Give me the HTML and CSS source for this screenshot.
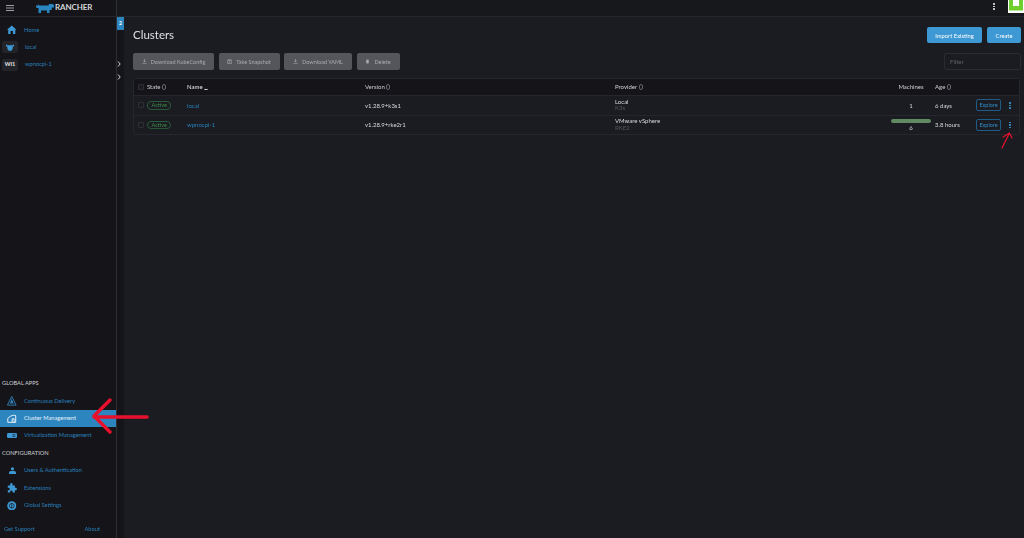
FILE: index.html
```html
<!DOCTYPE html>
<html lang="en">
<head>
<meta charset="utf-8">
<title>Rancher - Clusters</title>
<link rel="stylesheet" href="styles.css">
</head>
<body>
<div class="app">
  <header class="top">
    <div class="top-left">
      <svg class="burger" viewBox="0 0 8 6"><path d="M0 .5h8M0 3h8M0 5.500h8" stroke="#aeb0b5" stroke-width=".9"/></svg>
      <svg class="logo" viewBox="0 0 18 9"><path d="M0 1.500h2V0l1 1.500h9.500L13 0h3.500L18 1v2.500h-2L15.500 6h-2v3h-2.500V6.500H5V9H2.500V4H1L0 3z" fill="#2a86c0"/></svg>
      <span class="brand">RANCHER</span>
    </div>
    <div class="top-right">
      <span class="kebab light"><i></i><i></i><i></i></span>
      <span class="avatar"><svg viewBox="0 0 16 13"><path d="M0 0h16v13H0z" fill="#fff"/><path d="M1 0h4v6h6V0h4v10.500H1z" fill="#6fcf2e"/></svg></span>
    </div>
  </header>
  <div class="body">
    <aside class="side">
      <nav class="nav-top">
        <a class="item"><span class="ic"><svg viewBox="0 0 12 11"><path d="M6 0l6 5.500h-1.500V11H7.500V7h-3v4h-3V5.500H0z" fill="#3d98d3"/></svg></span>Home</a>
        <a class="item"><span class="ic chip"><svg viewBox="0 0 12 10"><path d="M0 0l2 1.500h8L12 0v3l-2 1v3L8 10H4L2 7V4L0 3z" fill="#3d98d3"/></svg></span>local</a>
        <a class="item"><span class="ic chip txt">WI1</span>wpnocpi-1</a>
      </nav>
      <div class="nav-bottom">
        <h4 class="group">GLOBAL APPS</h4>
        <a class="item"><span class="ic"><svg viewBox="0 0 12 12"><path d="M6 .5L11.500 11.500H.5z" fill="none" stroke="#2f7fb5" stroke-width="1.200"/><path d="M6 3.500L8.500 9.500h-5z" fill="#2f7fb5"/></svg></span>Continuous Delivery</a>
        <a class="item active"><span class="ic"><svg viewBox="0 0 12 10"><path d="M1 9.500V4.500L4 2l4-1.500 3 .5v8.500zM6.500 9.500V5h2.500v4.500" fill="none" stroke="#fff" stroke-width="1.100"/></svg></span>Cluster Management</a>
        <a class="item"><span class="ic"><svg class="wide" viewBox="0 0 12 6"><rect x="0" y="0" width="12" height="6" rx="1.500" fill="#3d98d3"/><path d="M6.500 2h3.500M6.500 4h3.500" stroke="#141419" stroke-width=".8"/></svg></span>Virtualization Management</a>
        <h4 class="group">CONFIGURATION</h4>
        <a class="item"><span class="ic"><svg class="small" viewBox="0 0 10 10"><circle cx="5" cy="2.500" r="2.300" fill="#3d98d3"/><path d="M0 10V8c0-1.500 2-2.500 5-2.500S10 6.500 10 8v2z" fill="#3d98d3"/></svg></span>Users &amp; Authentication</a>
        <a class="item"><span class="ic"><svg viewBox="0 0 12 12"><path d="M1 3h3V1.500a1.500 1.500 0 013 0V3h3v3h1a1.500 1.500 0 010 3h-1v3H7v-1a1.500 1.500 0 00-3 0v1H1V9h1a1.500 1.500 0 000-3H1z" fill="#3d98d3"/></svg></span>Extensions</a>
        <a class="item"><span class="ic"><svg viewBox="0 0 12 12"><circle cx="6" cy="6" r="5.700" fill="#3d98d3"/><circle cx="6" cy="6" r="3" fill="none" stroke="#141419" stroke-width=".9"/><path d="M6 3v6" stroke="#141419" stroke-width=".9"/></svg></span>Global Settings</a>
      </div>
      <footer class="side-foot"><a>Get Support</a><a>About</a></footer>
    </aside>
    <div class="gutter">
      <span class="tab">2</span>
      <svg class="chev first" viewBox="0 0 4 6"><path d="M1 .5L3.200 3 1 5.500" fill="none" stroke="#d5d6d8"/></svg>
      <svg class="chev" viewBox="0 0 4 6"><path d="M1 .5L3.200 3 1 5.500" fill="none" stroke="#d5d6d8"/></svg>
    </div>
    <main class="main">
      <div class="title-row">
        <h1>Clusters</h1>
        <div class="actions"><button class="btn primary b1">Import Existing</button><button class="btn primary b2">Create</button></div>
      </div>
      <div class="tools">
        <button class="btn muted w1"><svg class="bi" viewBox="0 0 8 8"><path d="M4 0v5M2 3l2 2 2-2M.5 7.500h7" fill="none" stroke="#a9abb0"/></svg>Download KubeConfig</button>
        <button class="btn muted w2"><svg class="bi" viewBox="0 0 8 8"><path d="M.5 2h7v5h-7zM2.500 2V1h3v1M4 3v3" fill="none" stroke="#a9abb0"/></svg>Take Snapshot</button>
        <button class="btn muted w3"><svg class="bi" viewBox="0 0 8 8"><path d="M4 0v5M2 3l2 2 2-2M.5 7.500h7" fill="none" stroke="#a9abb0"/></svg>Download YAML</button>
        <button class="btn muted w4"><svg class="bi" viewBox="0 0 8 8"><path d="M2 1h4v6H2z" fill="#a9abb0"/></svg>Delete</button>
        <input class="filter" placeholder="Filter">
      </div>
      <div class="table">
        <div class="row head">
          <span><i class="check"></i></span><span>State <b class="sort"></b></span><span class="strong">Name <b class="sort on"></b></span><span>Version <b class="sort"></b></span><span>Provider <b class="sort"></b></span><span class="mid">Machines</span><span>Age <b class="sort"></b></span>
        </div>
        <div class="row">
          <span><i class="check"></i></span><span><em class="badge">Active</em></span><a>local</a><span>v1.28.9+k3s1</span>
          <span class="prov">Local<small>K3s</small></span><span class="mid">1</span><span>6 days</span>
          <button class="explore">Explore</button><span class="kebab"><i></i><i></i><i></i></span>
        </div>
        <div class="row">
          <span><i class="check"></i></span><span><em class="badge">Active</em></span><a>wpnocpi-1</a><span>v1.28.9+rke2r1</span>
          <span class="prov">VMware vSphere<small>RKE2</small></span><span class="mid"><u class="bar"></u>6</span><span>3.8 hours</span>
          <button class="explore">Explore</button><span class="kebab"><i></i><i></i><i></i></span>
        </div>
      </div>
    </main>
  </div>
</div>
<svg class="marks" viewBox="0 0 1024 538">
  <path d="M147 417H94M110 400L94 416 110 432" fill="none" stroke="#e8112d" stroke-width="3.500" stroke-linecap="round" stroke-linejoin="round"/>
  <path d="M1002 148L1009 134M1003 137L1009.500 133 1012 138" fill="none" stroke="#e8112d" stroke-width="1.200" stroke-linecap="round"/>
</svg>
</body>
</html>
```

FILE: styles.css
```css
* { box-sizing: border-box; }
html, body { margin: 0; height: 100%; overflow: hidden; }
body { background: #1b1c21; color: #d8d9dc; font: 6px/1.2 Lato, "Liberation Sans", sans-serif; position: relative; }
a { color: #2a80bb; }
.app { display: flex; flex-direction: column; height: 538px; filter: blur(.3px); }

.top { flex: 0 0 17px; display: flex; justify-content: space-between; border-bottom: 1px solid #26272c; background: #17181c; }
.top-left { display: flex; align-items: center; width: 117px; padding-left: 6px; background: #141419; border-right: 1px solid #2e2f34; }
.burger { width: 8px; height: 6px; margin-right: 22px; }
.logo { width: 18px; height: 9px; margin-right: 1px; }
.brand { font-size: 8px; font-weight: 700; color: #d5d6d8; letter-spacing: -.1px; }
.top-right { display: flex; align-items: flex-start; }
.top-right .kebab { margin-top: 3px; margin-right: 13px; }
.avatar { width: 16px; height: 13px; display: block; }
.avatar svg { display: block; width: 16px; height: 13px; }

.kebab { width: 2px; display: flex; flex-direction: column; gap: 1px; }
.kebab i { width: 1.500px; height: 1.500px; border-radius: 50%; background: #3d98d3; }
.kebab.light i { background: #e2e3e5; }

.body { flex: 1; display: flex; min-height: 0; }
.side { width: 117px; flex: none; display: flex; flex-direction: column; background: #141419; border-right: 1px solid #2e2f34; }
.nav-top { padding-top: 4.500px; }
.item { display: flex; align-items: center; height: 17.300px; color: #2a80bb; font-size: 5.700px; }
.ic { width: 24px; flex: none; display: flex; justify-content: center; align-items: center; }
.ic svg { width: 9.500px; height: 9.500px; }
.ic svg.wide { width: 10px; height: 5px; }
.ic svg.small { width: 7px; height: 7px; }
.chip { width: 16px; height: 12px; margin: 0 7px 0 2px; background: #232429; border-radius: 2px; }
.chip svg { width: 8px; height: 7px; }
.txt { color: #e6e7e9; font-weight: 700; font-size: 5.500px; }
.nav-bottom { margin-top: auto; }
.group { margin: 0; height: 18px; line-height: 18px; padding-left: 2px; font-size: 5.700px; font-weight: 400; color: #d0d1d4; }
.active { background: #2c85bf; color: #e8f2f8; }
.side-foot { display: flex; justify-content: space-between; padding: 12px 16px 5px 4px; }
.side-foot a { font-size: 5.700px; }

.gutter { width: 7px; flex: none; background: #141419; position: relative; }
.tab { position: absolute; left: 0; top: 0; width: 7px; height: 13px; background: #2c85bf; color: #fff; font-size: 5px; font-weight: 700; text-align: center; line-height: 13px; }
.chev { position: absolute; left: 0; top: 57px; width: 4px; height: 6px; }
.chev.first { top: 44px; }

.main { flex: 1; min-width: 0; padding: 10px 3px 0 9px; }
.title-row { display: flex; justify-content: space-between; align-items: center; height: 16px; }
h1 { margin: 0; font-size: 11.500px; font-weight: 400; color: #dfe0e3; }
.actions { display: flex; gap: 5px; }
.btn { border: 0; border-radius: 2px; height: 16px; font: 5.500px Lato, "Liberation Sans", sans-serif; padding: 0; display: inline-flex; align-items: center; justify-content: center; }
.primary { background: #3d98d3; color: #fff; font-size: 5.800px; }
.b1 { width: 55px; } .b2 { width: 34px; }
.tools { display: flex; gap: 4.500px; margin-top: 10px; }
.muted { background: #55565b; color: #a9abb0; height: 17px; }
.bi { width: 5px; height: 5px; margin-right: 4px; }
.w1 { width: 81px; } .w2 { width: 61px; } .w3 { width: 68px; } .w4 { width: 43px; }
.filter { margin-left: auto; width: 77px; height: 17px; background: #1b1c21; border: 1px solid #2b2c31; border-radius: 2px; padding: 0 5px; font: 6px Lato, "Liberation Sans", sans-serif; color: #ccc; }
.filter::placeholder { color: #5f6066; }

.table { margin-top: 8px; width: 887px; border: 1px solid #26272c; border-radius: 3px; }
.row { display: grid; grid-template-columns: 13px 40px 178px 250px 276px 40px 45px 25px 1fr; align-items: center; height: 19.500px; border-top: 1px solid #26272c; font-size: 6px; color: #d8d9dc; }
.row > span:first-child { padding-left: 4px; }
.head { height: 16px; padding-bottom: 1px; border-top: 0; background: #141419; font-weight: 400; color: #cfd0d3; }
.row > :nth-child(7) { padding-left: 4px; }
.check { display: block; width: 6px; height: 6px; border: 1px solid #2e2f34; border-radius: 1px; background: #1b1c21; }
.sort { display: inline-block; width: 4px; height: 6px; border: .5px solid #66676c; border-radius: 2px; vertical-align: -1px; }
.sort.on { height: 3px; border-width: 0 0 1px; border-color: #cfd0d3; }
.strong { color: #e6e7e9; }
.badge { display: inline-block; font-style: normal; font-size: 5.500px; color: #3f8a4a; border: 1px solid #27593a; border-radius: 4px; padding: 0 3.500px; line-height: 6.500px; }
.prov { display: flex; flex-direction: column; line-height: 6.500px; }
.prov small { font-size: 6px; color: #55565b; }
.mid { text-align: center; }
.bar { display: block; height: 4px; margin-bottom: 1px; border-radius: 2px; background: #5f8a62; }
.explore { width: 25px; height: 12px; padding: 0; border: 1px solid #1f5b85; border-radius: 2px; background: transparent; color: #2f8ac6; font: 5.500px Lato, "Liberation Sans", sans-serif; }
.row .kebab { justify-self: center; }

.marks { position: absolute; left: 0; top: 0; width: 1024px; height: 538px; pointer-events: none; }
```
